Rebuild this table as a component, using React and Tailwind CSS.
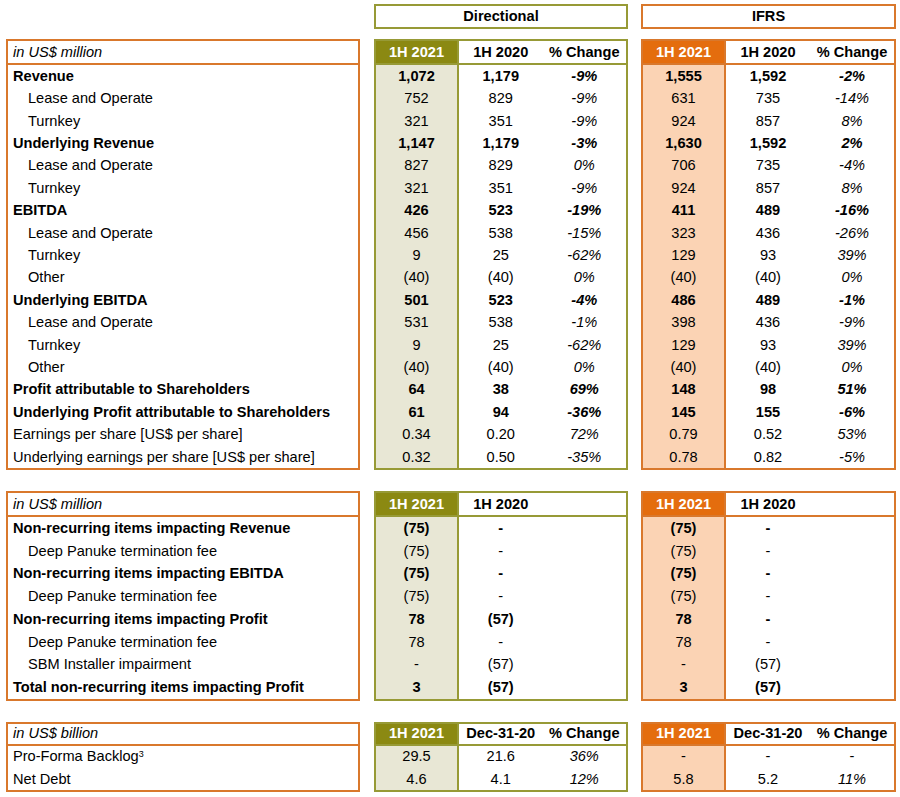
const OLIVE = {
  border: 'border-[#979a36]',
  head: 'bg-[#8b8912]',
  fill: 'bg-[#e8e7d5]',
}
const ORANGE = {
  border: 'border-[#d9782c]',
  head: 'bg-[#e46d0e]',
  fill: 'bg-[#fbd3b4]',
}

const MAIN = [
  ['Revenue', 0, 1, '1,072', '1,179', '-9%', '1,555', '1,592', '-2%'],
  ['Lease and Operate', 1, 0, '752', '829', '-9%', '631', '735', '-14%'],
  ['Turnkey', 1, 0, '321', '351', '-9%', '924', '857', '8%'],
  ['Underlying Revenue', 0, 1, '1,147', '1,179', '-3%', '1,630', '1,592', '2%'],
  ['Lease and Operate', 1, 0, '827', '829', '0%', '706', '735', '-4%'],
  ['Turnkey', 1, 0, '321', '351', '-9%', '924', '857', '8%'],
  ['EBITDA', 0, 1, '426', '523', '-19%', '411', '489', '-16%'],
  ['Lease and Operate', 1, 0, '456', '538', '-15%', '323', '436', '-26%'],
  ['Turnkey', 1, 0, '9', '25', '-62%', '129', '93', '39%'],
  ['Other', 1, 0, '(40)', '(40)', '0%', '(40)', '(40)', '0%'],
  ['Underlying EBITDA', 0, 1, '501', '523', '-4%', '486', '489', '-1%'],
  ['Lease and Operate', 1, 0, '531', '538', '-1%', '398', '436', '-9%'],
  ['Turnkey', 1, 0, '9', '25', '-62%', '129', '93', '39%'],
  ['Other', 1, 0, '(40)', '(40)', '0%', '(40)', '(40)', '0%'],
  ['Profit attributable to Shareholders', 0, 1, '64', '38', '69%', '148', '98', '51%'],
  ['Underlying Profit attributable to Shareholders', 0, 1, '61', '94', '-36%', '145', '155', '-6%'],
  ['Earnings per share [US$ per share]', 0, 0, '0.34', '0.20', '72%', '0.79', '0.52', '53%'],
  ['Underlying earnings per share [US$ per share]', 0, 0, '0.32', '0.50', '-35%', '0.78', '0.82', '-5%'],
]

const NON_RECURRING = [
  ['Non-recurring items impacting Revenue', 0, 1, '(75)', '-', '', '(75)', '-', ''],
  ['Deep Panuke termination fee', 1, 0, '(75)', '-', '', '(75)', '-', ''],
  ['Non-recurring items impacting EBITDA', 0, 1, '(75)', '-', '', '(75)', '-', ''],
  ['Deep Panuke termination fee', 1, 0, '(75)', '-', '', '(75)', '-', ''],
  ['Non-recurring items impacting Profit', 0, 1, '78', '(57)', '', '78', '-', ''],
  ['Deep Panuke termination fee', 1, 0, '78', '-', '', '78', '-', ''],
  ['SBM Installer impairment', 1, 0, '-', '(57)', '', '-', '(57)', ''],
  ['Total non-recurring items impacting Profit', 0, 1, '3', '(57)', '', '3', '(57)', ''],
]

const BACKLOG = [
  [<>Pro-Forma Backlog<sup className="text-[9px] relative -top-[3px]">3</sup></>, 0, 0, '29.5', '21.6', '36%', '-', '-', '-'],
  ['Net Debt', 0, 0, '4.6', '4.1', '12%', '5.8', '5.2', '11%'],
]

function LabelBox({ title, rows, rowH, headH }) {
  return (
    <div className={`w-[354px] border-2 ${ORANGE.border}`}>
      <div style={{ height: headH }} className={`flex items-center pl-[5px] italic border-b-2 ${ORANGE.border}`}>{title}</div>
      {rows.map((r, i) => (
        <div
          key={i}
          style={{ height: rowH }}
          className={`flex items-center whitespace-nowrap ${r[1] ? 'pl-[20px]' : 'pl-[5px]'} ${r[2] ? 'font-bold' : ''}`}
        >
          {r[0]}
        </div>
      ))}
    </div>
  )
}

function DataBox({ theme, headers, rows, rowH, headH, offset, w }) {
  return (
    <div className={`${w} border-2 ${theme.border}`}>
      <div style={{ height: headH }} className={`grid grid-cols-[83px_1fr_1fr] font-bold border-b-2 ${theme.border}`}>
        <div className={`flex items-center justify-center text-white border-r-2 ${theme.border} ${theme.head}`}>{headers[0]}</div>
        <div className="flex items-center justify-center">{headers[1]}</div>
        <div className="flex items-center justify-center">{headers[2]}</div>
      </div>
      {rows.map((r, i) => {
        const bold = r[2] ? 'font-bold' : ''
        const pct = r[offset + 2]
        return (
          <div key={i} style={{ height: rowH }} className={`grid grid-cols-[83px_1fr_1fr] ${bold}`}>
            <div className={`flex items-center justify-center border-r-2 ${theme.border} ${theme.fill}`}>{r[offset]}</div>
            <div className="flex items-center justify-center">{r[offset + 1]}</div>
            <div className={`flex items-center justify-center ${pct === '-' ? '' : 'italic'}`}>{pct}</div>
          </div>
        )
      })}
    </div>
  )
}

function Section({ title, headers, rows, rowH, headH, className }) {
  return (
    <div className={`flex ${className}`}>
      <LabelBox title={title} rows={rows} rowH={rowH} headH={headH} />
      <div className="ml-[14px]">
        <DataBox theme={OLIVE} headers={headers} rows={rows} rowH={rowH} headH={headH} offset={3} w="w-[254px]" />
      </div>
      <div className="ml-[13px]">
        <DataBox theme={ORANGE} headers={headers} rows={rows} rowH={rowH} headH={headH} offset={6} w="w-[255px]" />
      </div>
    </div>
  )
}

export default function App() {
  return (
    <div
      className="w-[900px] h-[797px] bg-white text-black text-[14.6px] leading-none pl-[6px] pt-[4px]"
      style={{ fontFamily: '"Liberation Sans", Arial, sans-serif' }}
    >
      <div className="flex font-bold">
        <div className="w-[354px]" />
        <div className={`ml-[14px] w-[254px] h-[25px] border-2 ${OLIVE.border} flex items-center justify-center`}>Directional</div>
        <div className={`ml-[13px] w-[255px] h-[25px] border-2 ${ORANGE.border} flex items-center justify-center`}>IFRS</div>
      </div>
      <Section className="mt-[10px]" title="in US$ million" headers={['1H 2021', '1H 2020', '% Change']} rows={MAIN} rowH={22.4} headH={24} />
      <Section className="mt-[21px]" title="in US$ million" headers={['1H 2021', '1H 2020', '']} rows={NON_RECURRING} rowH={22.7} headH={24} />
      <Section className="mt-[21px]" title="in US$ billion" headers={['1H 2021', 'Dec-31-20', '% Change']} rows={BACKLOG} rowH={22.3} headH={22} />
    </div>
  )
}
